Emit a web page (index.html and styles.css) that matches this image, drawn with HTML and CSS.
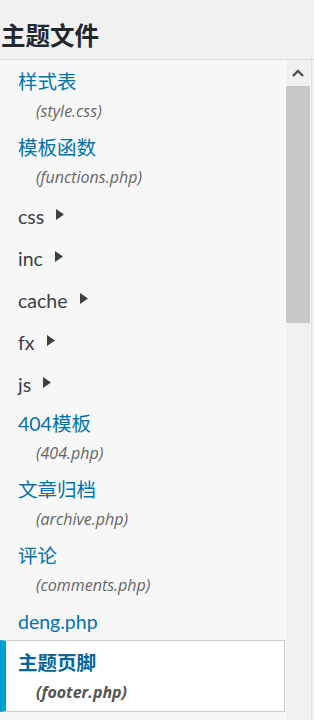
FILE: index.html
```html
<!DOCTYPE html>
<html lang="zh-CN">
<head>
<meta charset="utf-8">
<title>主题文件</title>
<link rel="stylesheet" href="styles.css">
</head>
<body>
<h2 class="heading">主题文件</h2>
<div class="panel">
  <ul class="files">
    <li class="file"><a class="title" href="#">样式表</a><span class="sub">(style.css)</span></li>
    <li class="file"><a class="title" href="#">模板函数</a><span class="sub">(functions.php)</span></li>
    <li class="folder"><span class="name">css</span><svg class="tri" width="8" height="11" viewBox="0 0 8 11"><path d="M0 0 L8 5.5 L0 11 Z"/></svg></li>
    <li class="folder"><span class="name">inc</span><svg class="tri" width="8" height="11" viewBox="0 0 8 11"><path d="M0 0 L8 5.5 L0 11 Z"/></svg></li>
    <li class="folder"><span class="name">cache</span><svg class="tri" width="8" height="11" viewBox="0 0 8 11"><path d="M0 0 L8 5.5 L0 11 Z"/></svg></li>
    <li class="folder"><span class="name">fx</span><svg class="tri" width="8" height="11" viewBox="0 0 8 11"><path d="M0 0 L8 5.5 L0 11 Z"/></svg></li>
    <li class="folder"><span class="name">js</span><svg class="tri" width="8" height="11" viewBox="0 0 8 11"><path d="M0 0 L8 5.5 L0 11 Z"/></svg></li>
    <li class="file"><a class="title" href="#">404模板</a><span class="sub">(404.php)</span></li>
    <li class="file"><a class="title" href="#">文章归档</a><span class="sub">(archive.php)</span></li>
    <li class="file"><a class="title" href="#">评论</a><span class="sub">(comments.php)</span></li>
    <li class="file"><a class="title" href="#">deng.php</a></li>
    <li class="file current"><a class="title" href="#">主题页脚</a><span class="sub">(footer.php)</span></li>
  </ul>
  <div class="scrollbar">
    <div class="sb-button"><svg width="12" height="8" viewBox="0 0 12 8"><path d="M1 7 L6 2 L11 7" fill="none" stroke="#505050" stroke-width="2.4"/></svg></div>
    <div class="sb-thumb"></div>
    <div class="sb-track"></div>
  </div>
  <div class="edge"></div>
</div>
</body>
</html>
```
FILE: styles.css
```css
html, body {
  margin: 0;
  padding: 0;
}
body {
  background: #f1f1f1;
  font-family: Lato, "Noto Sans CJK SC", sans-serif;
  height: 720px;
  overflow: hidden;
}
.heading {
  margin: 0 0 7px 0;
  padding: 20px 0 0 1px;
  font-size: 24.5px;
  line-height: 32px;
  font-weight: 700;
  color: #23282d;
}
.panel {
  border-top: 1px solid #dddddd;
  display: flex;
  height: 660px;
}
.files {
  list-style: none;
  margin: 0;
  padding: 4px 0 0 0;
  width: 285px;
  background: #f7f7f7;
  border-right: 1px solid #fbfbfb;
  overflow: hidden;
}
.file {
  padding: 4px 0 4px 18px;
  display: flex;
  flex-direction: column;
  align-items: flex-start;
}
.title {
  font-size: 19.5px;
  line-height: 28px;
  color: #0073aa;
  text-decoration: none;
}
.sub {
  font-family: "Open Sans", "Noto Sans CJK SC", sans-serif;
  font-size: 16px;
  line-height: 30px;
  font-style: italic;
  color: #666666;
  padding-left: 18px;
}
.folder {
  padding: 7px 0 7px 18px;
  display: flex;
  align-items: center;
  gap: 12px;
}
.name {
  font-size: 19.5px;
  line-height: 28px;
  color: #3c4146;
}
.tri {
  fill: #3c4146;
  position: relative;
  top: -3px;
}
.current {
  background: #ffffff;
  border: 1px solid #cccccc;
  border-left: 6px solid #00a0d2;
  padding: 8px 0 4px 12px;
}
.current .title {
  font-weight: 700;
  color: #00669b;
}
.current .sub {
  font-weight: 700;
  color: #555555;
}
.scrollbar {
  width: 24px;
  display: flex;
  flex-direction: column;
  background: #f1f1f1;
}
.sb-button {
  height: 26px;
  display: flex;
  align-items: center;
  justify-content: center;
}
.sb-thumb {
  height: 237px;
  background: #c8c8c8;
}
.sb-track {
  flex: 1;
}
.edge {
  width: 4px;
  border-left: 1px solid #f7f7f7;
  box-sizing: border-box;
  background: linear-gradient(to right, #e2e2e2 0 1px, #f1f1f1 1px);
}
```
